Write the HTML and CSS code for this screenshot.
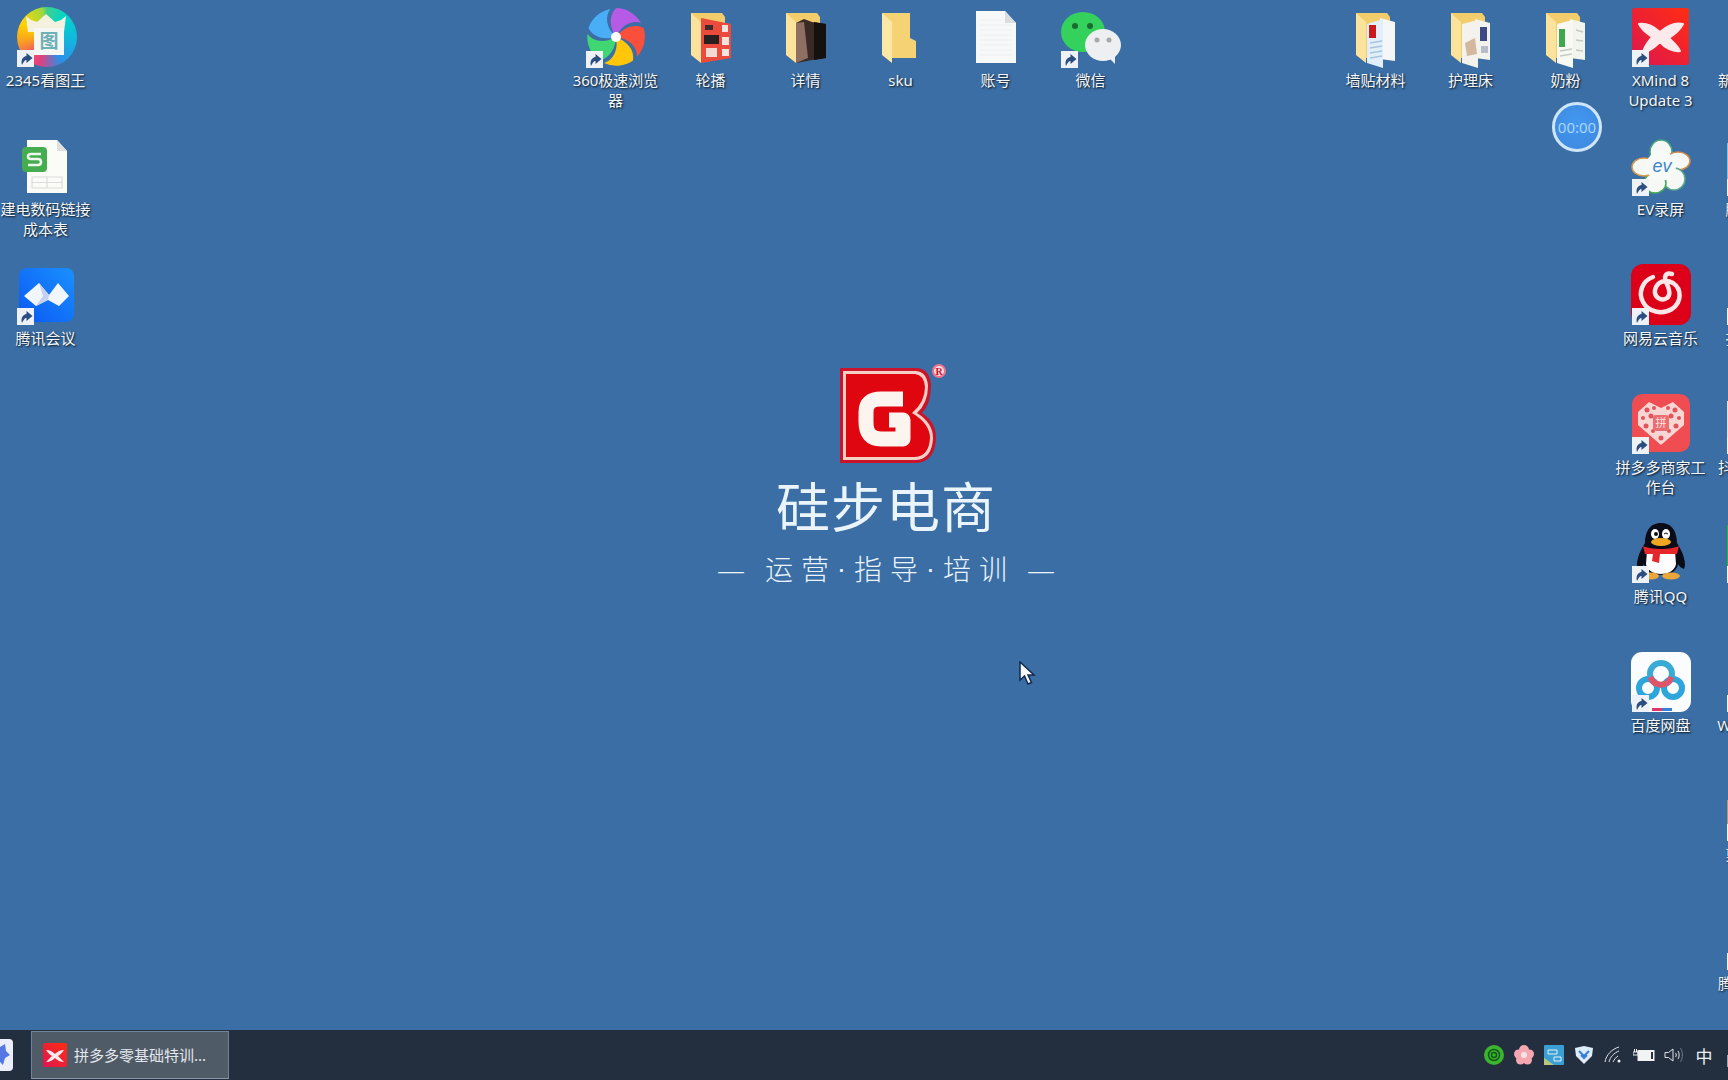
FILE: index.html
```html
<!DOCTYPE html>
<html lang="zh-CN">
<head>
<meta charset="utf-8">
<title>Desktop</title>
<link rel="stylesheet" href="styles.css">
</head>
<body>
<svg class="defs" width="0" height="0" aria-hidden="true">
  <defs>
    <symbol id="shortcut" viewBox="0 0 17 17">
      <rect width="17" height="17" fill="#eef2f6"/>
      <path d="M5 15C3.500 10 6 6.500 9.500 6V3L15.500 8 9.500 13V10C7.500 10 6.500 12 5 15Z" fill="#2b4d80"/>
    </symbol>
    <symbol id="folder-door" viewBox="0 0 60 60">
      <path d="M10 5H41L44 9V50H20L10 47Z" fill="#f3cd6c"/>
      <path d="M10 5 20 14V55L10 47Z" fill="#fbe39c"/>
    </symbol>
    <linearGradient id="xm" x1="0" y1="1" x2="1" y2="0">
      <stop offset="0" stop-color="#dd1650"/><stop offset="1" stop-color="#ff2d12"/>
    </linearGradient>
    <linearGradient id="tm" x1="0" y1="1" x2="1" y2="0">
      <stop offset="0" stop-color="#0a58f2"/><stop offset="1" stop-color="#1a90ff"/>
    </linearGradient>
  </defs>
</svg>

<main class="desktop">
  <div class="wallpaper">
    <svg class="logo-mark" width="110" height="102" viewBox="0 0 110 102">
      <path d="M0 6H77Q90 7 91 23 91 42 82 51 96 60 96 76 95 100 76 101H0Z" fill="#c9142a"/>
      <path d="M3 9H76Q87 10 88 24 88 41 77 51 93 61 93 76 92 97 76 98H3Z" fill="#f4cfc6"/>
      <path d="M6 12H75Q84 13 85 25 85 40 72 51 90 62 90 76 89 94 75 95H6Z" fill="#e0060f"/>
      <path d="M63 37H41Q26 37 26 50V60Q26 77 41 77H63V58H49" fill="none" stroke="#fbf4ef" stroke-width="15" stroke-linejoin="round"/>
      <circle cx="99" cy="9" r="6" fill="#fbd9df" stroke="#f0738d" stroke-width="2"/>
      <text x="99" y="13" class="logo-r">R</text>
    </svg>
    <div class="brand">硅步电商</div>
    <div class="slogan">
      <span class="slogan-dash">—</span>
      <span class="slogan-word">运营</span><span class="slogan-dot">·</span><span class="slogan-word">指导</span><span class="slogan-dot">·</span><span class="slogan-word">培训</span>
      <span class="slogan-dash">—</span>
    </div>
  </div>

  <div class="icons">

    <div class="item c0 r0">
      <div class="ico">
        <div class="round-2345"></div>
        <svg class="glyph" viewBox="0 0 60 60">
          <path d="M10 8 15 12 21 14 30 6 39 14 45 12 50 8 48 24H12Z" fill="#f5f1df"/>
          <rect x="18" y="20" width="30" height="27" fill="#f5f7f2"/>
          <text x="33" y="40" class="pic-char">图</text>
        </svg>
        <svg class="sc"><use href="#shortcut"/></svg>
      </div>
      <span class="label">2345看图王</span>
    </div>

    <div class="item c0 r1">
      <div class="ico">
        <svg class="glyph" viewBox="0 0 60 60">
          <path d="M11 3H41L51 14V56H11Z" fill="#fbfbf8"/>
          <path d="M41 3 51 14H41Z" fill="#dfe1dd"/>
          <rect x="6" y="10" width="25" height="25" rx="4" fill="#45ad50"/>
          <path d="M25 17H15Q12 17 12 19.500T15 22H22Q25 22 25 25T22 28H12" fill="none" stroke="#eef7ee" stroke-width="2.500"/>
          <path d="M16 40H46V51H16ZM16 45.500H46M31 40V51" fill="none" stroke="#dcdedc" stroke-width="1.200"/>
        </svg>
      </div>
      <span class="label">建电数码链接成本表</span>
    </div>

    <div class="item c0 r2">
      <div class="ico">
        <svg class="glyph" viewBox="0 0 60 60">
          <rect x="3" y="2" width="55" height="54" rx="8" fill="url(#tm)"/>
          <path d="M8 30 23 17 33 29 42 17 53 30 43 40 32 34 20 40Z" fill="#f1f6fd"/>
          <path d="M23 17 33 29 32 34 20 40 27 30Z" fill="#c5cff0"/>
        </svg>
        <svg class="sc"><use href="#shortcut"/></svg>
      </div>
      <span class="label">腾讯会议</span>
    </div>

    <div class="item c6 r0">
      <div class="ico">
        <svg class="glyph" viewBox="0 0 60 60">
          <path d="M30 29C24 20 22 8 30 0A29 29 0 0 1 55 15C47 12 36 16 30 29Z" fill="#49aef6" transform="rotate(288 30 29)"/>
          <path d="M30 29C24 20 22 8 30 0A29 29 0 0 1 55 15C47 12 36 16 30 29Z" fill="#40d673" transform="rotate(216 30 29)"/>
          <path d="M30 29C24 20 22 8 30 0A29 29 0 0 1 55 15C47 12 36 16 30 29Z" fill="#ffc60a" transform="rotate(144 30 29)"/>
          <path d="M30 29C24 20 22 8 30 0A29 29 0 0 1 55 15C47 12 36 16 30 29Z" fill="#fa4f3a" transform="rotate(72 30 29)"/>
          <path d="M30 29C24 20 22 8 30 0A29 29 0 0 1 55 15C47 12 36 16 30 29Z" fill="#b65be6"/>
          <circle cx="30" cy="29" r="5" fill="#fdfdfd"/>
        </svg>
        <svg class="sc sc-left"><use href="#shortcut"/></svg>
      </div>
      <span class="label">360极速浏览器</span>
    </div>

    <div class="item c7 r0">
      <div class="ico">
        <svg class="glyph" viewBox="0 0 60 60"><use href="#folder-door"/>
          <path d="M20 10 50 16V50L20 55Z" fill="#ea4b3c"/>
          <rect x="24" y="17" width="8" height="5" fill="#3d2a2a"/>
          <rect x="23" y="27" width="15" height="9" fill="#2a1f20"/>
          <rect x="25" y="40" width="11" height="9" fill="#f3d9d2"/>
          <rect x="41" y="17" width="6" height="7" fill="#f6e3df"/>
          <rect x="41" y="29" width="7" height="8" fill="#f6e3df"/>
          <rect x="41" y="41" width="7" height="7" fill="#f6e3df"/>
        </svg>
      </div>
      <span class="label">轮播</span>
    </div>

    <div class="item c8 r0">
      <div class="ico">
        <svg class="glyph" viewBox="0 0 60 60"><use href="#folder-door"/>
          <path d="M20 15 28 11 36 14 50 16V50L36 52 20 55Z" fill="#3a2a26"/>
          <path d="M20 15 28 14 32 50 20 55Z" fill="#8e6f62"/>
          <path d="M38 14 50 16V50L38 52Z" fill="#14110f"/>
        </svg>
      </div>
      <span class="label">详情</span>
    </div>

    <div class="item c9 r0">
      <div class="ico">
        <svg class="glyph" viewBox="0 0 60 60">
          <path d="M11 5H39V30L45 33V50H21Z" fill="#f5d274"/>
          <path d="M11 5 21 14V55L11 47Z" fill="#fbe7a6"/>
        </svg>
      </div>
      <span class="label">sku</span>
    </div>

    <div class="item c10 r0">
      <div class="ico">
        <svg class="glyph" viewBox="0 0 60 60">
          <path d="M10 3H39L50 15V55H10Z" fill="#f7f8f8"/>
          <path d="M39 3 50 15H39Z" fill="#d9dde0"/>
          <path d="M14 12H36M14 17H46M14 22H46M14 27H46M14 32H46M14 37H46M14 42H46M14 47H46" stroke="#eceef0"/>
        </svg>
      </div>
      <span class="label">账号</span>
    </div>

    <div class="item c11 r0">
      <div class="ico">
        <svg class="glyph" viewBox="0 0 60 60">
          <ellipse cx="22" cy="24" rx="22" ry="20" fill="#34d15d"/>
          <circle cx="14" cy="18" r="3" fill="#1a6b32"/>
          <circle cx="29" cy="18" r="3" fill="#1a6b32"/>
          <ellipse cx="42" cy="37" rx="18" ry="16" fill="#eeeff0"/>
          <path d="M48 50 54 56 54 46Z" fill="#eeeff0"/>
          <circle cx="36" cy="32" r="2.500" fill="#a8a8a8"/>
          <circle cx="48" cy="32" r="2.500" fill="#a8a8a8"/>
        </svg>
        <svg class="sc sc-left"><use href="#shortcut"/></svg>
      </div>
      <span class="label">微信</span>
    </div>

    <div class="item c14 r0">
      <div class="ico">
        <svg class="glyph" viewBox="0 0 60 60"><use href="#folder-door"/>
          <path d="M34 10 49 14V53L34 51Z" fill="#f5f6f7"/>
          <path d="M21 16 37 11V60L21 55Z" fill="#e0effa"/>
          <rect x="23" y="17" width="7" height="13" fill="#c8191d"/>
          <path d="M24 35 36 33M24 40 36 38M24 45 36 43M24 50 36 48" stroke="#a8c4dc" stroke-width="1.500"/>
        </svg>
      </div>
      <span class="label">墙贴材料</span>
    </div>

    <div class="item c15 r0">
      <div class="ico">
        <svg class="glyph" viewBox="0 0 60 60"><use href="#folder-door"/>
          <path d="M34 11 49 15V52L34 50Z" fill="#f3f3ee"/>
          <path d="M21 16 37 12V60L21 55Z" fill="#f4f2ec"/>
          <rect x="39" y="19" width="7" height="14" fill="#3e4a86"/>
          <path d="M24 35 34 30 36 46 26 48Z" fill="#d3b79e"/>
          <rect x="40" y="38" width="7" height="7" fill="#b7bcc9"/>
        </svg>
      </div>
      <span class="label">护理床</span>
    </div>

    <div class="item c16 r0">
      <div class="ico">
        <svg class="glyph" viewBox="0 0 60 60"><use href="#folder-door"/>
          <path d="M34 11 49 15V52L34 50Z" fill="#f2f4ee"/>
          <path d="M21 16 37 12V60L21 55Z" fill="#f7f9f2"/>
          <rect x="23" y="21" width="6" height="18" fill="#3fa84e"/>
          <path d="M24 43 36 41M24 48 36 46M40 22 47 24M40 32 47 33M40 42 47 43" stroke="#c4cbbf" stroke-width="1.500"/>
        </svg>
      </div>
      <span class="label">奶粉</span>
    </div>

    <div class="item c17 r0">
      <div class="ico">
        <svg class="glyph" viewBox="0 0 60 60">
          <rect x="1" y="0" width="57" height="57" rx="3" fill="url(#xm)"/>
          <path d="M8 16C15 15 22 18 29 24 36 18 43 14 52 16 49 22 44 26 38 30 42 34 47 38 49 43 42 44 34 40 29 34 24 39 18 43 12 45 12 40 17 34 21 29 15 25 10 21 8 16Z" fill="#fbe9ec" stroke="#fbe9ec" stroke-width="2" stroke-linejoin="round"/>
        </svg>
        <svg class="sc"><use href="#shortcut"/></svg>
      </div>
      <span class="label">XMind 8 Update 3</span>
    </div>

    <div class="item c17 r1">
      <div class="ico">
        <svg class="glyph" viewBox="0 0 60 60">
          <g stroke-width="1.500" fill="#f5f8f4">
            <ellipse cx="30" cy="15" rx="11" ry="12" stroke="#46a67c"/>
            <ellipse cx="47" cy="24" rx="12" ry="9" stroke="#d58a4a"/>
            <ellipse cx="43" cy="42" rx="11" ry="11" stroke="#5aa98a"/>
            <ellipse cx="24" cy="46" rx="11" ry="10" stroke="#45a65a"/>
            <ellipse cx="13" cy="30" rx="12" ry="9" stroke="#d59a4a"/>
          </g>
          <circle cx="30" cy="29" r="15" fill="#f8faf7"/>
          <text x="31" y="35" class="ev-mark">ev</text>
        </svg>
        <svg class="sc"><use href="#shortcut"/></svg>
      </div>
      <span class="label">EV录屏</span>
    </div>

    <div class="item c17 r2">
      <div class="ico">
        <svg class="glyph" viewBox="0 0 60 60">
          <rect x="0" y="-2" width="60" height="61" rx="12" fill="#dc0019"/>
          <path d="M22 11C11 15 7 27 12 36 17 46 31 49 41 43 51 36 51 23 42 17 35 13 26 15 24 24 23 31 30 36 36 32 40 29 38 22 35 16 33 11 34 6 41 8" fill="none" stroke="#fde6e6" stroke-width="4.500" stroke-linecap="round"/>
        </svg>
        <svg class="sc"><use href="#shortcut"/></svg>
      </div>
      <span class="label">网易云音乐</span>
    </div>

    <div class="item c17 r3">
      <div class="ico">
        <svg class="glyph" viewBox="0 0 60 60">
          <rect x="1" y="-1" width="58" height="58" rx="10" fill="#ef4d52"/>
          <path d="M7 17 18 7 30 13 42 7 53 17V30L30 50 7 30Z" fill="#f8d6d4"/>
          <g fill="#e2545a">
            <circle cx="16" cy="15" r="2.500"/><circle cx="23" cy="13" r="2"/><circle cx="37" cy="13" r="2"/><circle cx="44" cy="15" r="2.500"/>
            <circle cx="12" cy="23" r="2"/><circle cx="20" cy="21" r="2.500"/><circle cx="40" cy="21" r="2.500"/><circle cx="48" cy="23" r="2"/>
            <circle cx="15" cy="31" r="2.500"/><circle cx="45" cy="31" r="2.500"/><circle cx="22" cy="36" r="2"/><circle cx="38" cy="36" r="2"/>
            <circle cx="30" cy="43" r="2.500"/>
          </g>
          <rect x="22" y="20" width="16" height="16" rx="3" fill="#ea6d70"/>
          <text x="30" y="32" class="pdd-char">拼</text>
        </svg>
        <svg class="sc"><use href="#shortcut"/></svg>
      </div>
      <span class="label">拼多多商家工作台</span>
    </div>

    <div class="item c17 r4">
      <div class="ico">
        <svg class="glyph" viewBox="0 0 60 60">
          <path d="M30 -1C42 -1 46 9 46 19 52 28 56 40 53 45 50 44 48 42 47 40 46 46 42 50 30 51 18 50 14 46 13 40 12 42 10 44 7 45 4 40 8 28 14 19 14 9 18 -1 30 -1Z" fill="#0a0d17"/>
          <path d="M16 27H44L45 40C44 46 38 50 30 50 22 50 16 46 15 40Z" fill="#fdfdfd"/>
          <path d="M12 22C20 26 40 26 48 22L46 30H29L28 39 21 37 22 30H14Z" fill="#e5262b"/>
          <ellipse cx="24" cy="10" rx="4" ry="5" fill="#fff"/>
          <ellipse cx="35" cy="10" rx="4" ry="5" fill="#fff"/>
          <circle cx="25" cy="10" r="2" fill="#111"/>
          <path d="M33 10Q35 8 37 10" stroke="#111" fill="none"/>
          <ellipse cx="30" cy="18" rx="10" ry="4" fill="#f0a820"/>
          <ellipse cx="20" cy="52" rx="8" ry="3.500" fill="#e9a63a"/>
          <ellipse cx="40" cy="52" rx="9" ry="3.500" fill="#e9a63a"/>
        </svg>
        <svg class="sc"><use href="#shortcut"/></svg>
      </div>
      <span class="label">腾讯QQ</span>
    </div>

    <div class="item c17 r5">
      <div class="ico">
        <svg class="glyph" viewBox="0 0 60 60">
          <rect x="0" y="-1" width="60" height="60" rx="11" fill="#fbfcfd"/>
          <circle cx="17" cy="35" r="9" fill="none" stroke="#2ea5db" stroke-width="6"/>
          <circle cx="42" cy="35" r="9" fill="none" stroke="#2ea5db" stroke-width="6"/>
          <circle cx="30" cy="21" r="11" fill="none" stroke="#39a9d6" stroke-width="6"/>
          <path d="M19.500 24A11 11 0 0 0 40.500 24" fill="none" stroke="#e0546a" stroke-width="6"/>
          <rect x="21" y="55" width="10" height="3" fill="#e0366c"/>
          <rect x="31" y="55" width="10" height="3" fill="#3b7ed8"/>
        </svg>
        <svg class="sc"><use href="#shortcut"/></svg>
      </div>
      <span class="label">百度网盘</span>
    </div>

    <div class="item c18 r0"><div class="ico"></div><span class="label">新建文件夹</span></div>
    <div class="item c18 r1"><div class="ico ico-sky"><svg class="sc"><use href="#shortcut"/></svg></div><span class="label">腾讯视频</span></div>
    <div class="item c18 r2"><div class="ico"><svg class="sc"><use href="#shortcut"/></svg></div><span class="label">抖音直播</span></div>
    <div class="item c18 r3"><div class="ico ico-pale"><svg class="sc"><use href="#shortcut"/></svg></div><span class="label">抖店工作台</span></div>
    <div class="item c18 r4"><div class="ico ico-green"><svg class="sc"><use href="#shortcut"/></svg></div><span class="label">爱奇艺</span></div>
    <div class="item c18 r5"><div class="ico"><svg class="sc"><use href="#shortcut"/></svg></div><span class="label">WPS Office</span></div>
    <div class="item c18 r6"><div class="ico ico-tan"><svg class="sc"><use href="#shortcut"/></svg></div><span class="label">剪映专业</span></div>
    <div class="item c18 r7"><div class="ico"><svg class="sc"><use href="#shortcut"/></svg></div><span class="label">腾讯课堂直</span></div>
  </div>

  <div class="timer">00:00</div>

  <svg class="pointer" width="17" height="24" viewBox="0 0 17 24">
    <path d="M1 1V19L5.500 15 9 23 12.500 21.500 9 14H15Z" fill="#f6f9fc" stroke="#13294a" stroke-width="1.500"/>
  </svg>
</main>

<footer class="taskbar">
  <div class="start">
    <svg width="13" height="32" viewBox="0 0 13 32">
      <path d="M0 0H9Q13 0 13 4V28Q13 32 9 32H0Z" fill="#eceefb"/>
      <path d="M0 8 5 5 6 12 10 16 5 19 3 26 0 23Z" fill="#5577e4"/>
    </svg>
  </div>
  <div class="task-btn">
    <svg width="26" height="26" viewBox="0 0 26 26">
      <rect x="1" y="1" width="24" height="24" rx="2" fill="url(#xm)"/>
      <path d="M4 8C8 8 11 10 13 12 15 10 18 8 22 8 20 11 18 13 16 14 18 16 20 18 22 20 18 20 15 18 13 16 11 18 8 20 4 20 6 18 8 16 10 14 8 13 6 11 4 8Z" fill="#fbe9ec"/>
    </svg>
    <span class="task-title">拼多多零基础特训...</span>
  </div>
  <div class="tray">
    <div class="tray-item">
      <svg width="20" height="20" viewBox="0 0 20 20">
        <circle cx="10" cy="10" r="10" fill="#3cb52e"/>
        <circle cx="10" cy="10" r="5.500" fill="none" stroke="#10591a" stroke-width="1.500"/>
        <circle cx="10" cy="10" r="2.500" fill="none" stroke="#10591a" stroke-width="1.500"/>
      </svg>
    </div>
    <div class="tray-item">
      <svg width="20" height="20" viewBox="0 0 20 20">
        <g fill="#f4a7b0">
          <circle cx="10" cy="5" r="5"/><circle cx="15.500" cy="9" r="4.500"/><circle cx="13.500" cy="15" r="4.500"/><circle cx="6.500" cy="15" r="4.500"/><circle cx="4.500" cy="9" r="4.500"/>
        </g>
        <circle cx="10" cy="10" r="3" fill="#f6e4e4"/>
      </svg>
    </div>
    <div class="tray-item">
      <svg width="20" height="20" viewBox="0 0 20 20">
        <rect width="20" height="20" rx="1" fill="#3b9fd4"/>
        <path d="M0 13 10 20H0Z" fill="#b9c77d"/>
        <path d="M4 5H13V9H4ZM10 12H17V16H10Z" fill="none" stroke="#dff2fb"/>
      </svg>
    </div>
    <div class="tray-item">
      <svg width="20" height="20" viewBox="0 0 20 20">
        <path d="M1 3 10 1 19 3 18 11 10 19 2 11Z" fill="#dcecfb"/>
        <path d="M5 6 10 11 15 6M7 10 10 13 13 10" fill="none" stroke="#3a7fd5" stroke-width="2"/>
      </svg>
    </div>
    <div class="tray-item">
      <svg width="20" height="20" viewBox="0 0 20 20" fill="none" stroke="#dfe3e8">
        <path d="M1 17C2 10 8 4 15 2M5 17C6 12 10 8 15 6M9 17C10 15 12 12 14 11"/>
        <circle cx="15" cy="16" r="1.500" fill="#eef0f3" stroke="none"/>
      </svg>
    </div>
    <div class="tray-item">
      <svg width="22" height="16" viewBox="0 0 22 16">
        <rect x="5" y="3.500" width="16" height="10" fill="#f2f3f5" stroke="#eef0f2"/>
        <rect x="18" y="5" width="2" height="7" fill="#232f3f"/>
        <path d="M0 5H5V8H0ZM1.500 2V5M3.500 2V5" stroke="#f0f1f3" fill="none"/>
      </svg>
    </div>
    <div class="tray-item">
      <svg width="20" height="20" viewBox="0 0 20 20" fill="none" stroke="#dfe3e8">
        <path d="M1 7.500H4.500L9 4V16L4.500 12.500H1Z"/>
        <path d="M11.500 8C12.500 9 12.500 11 11.500 12M14 6C15.500 8 15.500 12 14 14" />
        <path d="M16.500 3C19 7 19 13 16.500 17" stroke="#707985"/>
      </svg>
    </div>
    <div class="tray-item tray-ime">中</div>
    <div class="tray-edge"><span class="tray-edge-mark"></span></div>
  </div>
</footer>
</body>
</html>
```

FILE: styles.css
```css
* {
  box-sizing: border-box;
}

html,
body {
  margin: 0;
  padding: 0;
}

body {
  width: 1728px;
  height: 1080px;
  display: flex;
  flex-direction: column;
  overflow: hidden;
  background: #3a6ea5;
  font-family: "Noto Sans", "Noto Sans CJK SC", sans-serif;
}

.defs {
  position: absolute;
}

.desktop {
  position: relative;
  flex: 0 0 1030px;
  overflow: hidden;
}

.wallpaper {
  position: absolute;
  inset: 0;
  display: flex;
  flex-direction: column;
  align-items: center;
  padding: 362px 0 0 44px;
  color: #eaf4fa;
}

.logo-mark {
  margin-left: 18px;
  display: block;
}

.logo-r {
  font: bold 10px "Liberation Serif", serif;
  fill: #c9142a;
  text-anchor: middle;
}

.brand {
  margin-top: 8px;
  font-size: 54px;
  line-height: 70px;
  font-weight: 400;
  letter-spacing: 1px;
}

.slogan {
  display: flex;
  align-items: center;
  margin-top: 7px;
  font-size: 28px;
  line-height: 40px;
  font-weight: 300;
}

.slogan-dash:first-child {
  margin-right: 20px;
}

.slogan-dash:last-child {
  margin-left: 20px;
}

.slogan-word {
  letter-spacing: 8px;
  margin-right: -8px;
}

.slogan-dot {
  width: 25px;
  text-align: center;
  font-family: "Liberation Sans", sans-serif;
}

.icons {
  display: grid;
  grid-template-columns: repeat(19, 95px);
  grid-auto-rows: 129px;
  width: 1805px;
  margin-left: -2px;
}

.item {
  display: flex;
  flex-direction: column;
  align-items: center;
  padding-top: 8px;
}

.c0 { grid-column: 1; }
.c6 { grid-column: 7; }
.c7 { grid-column: 8; }
.c8 { grid-column: 9; }
.c9 { grid-column: 10; }
.c10 { grid-column: 11; }
.c11 { grid-column: 12; }
.c14 { grid-column: 15; }
.c15 { grid-column: 16; }
.c16 { grid-column: 17; }
.c17 { grid-column: 18; }
.c18 { grid-column: 19; }

.r0 { grid-row: 1; }
.r1 { grid-row: 2; }
.r2 { grid-row: 3; }
.r3 { grid-row: 4; }
.r4 { grid-row: 5; }
.r5 { grid-row: 6; }
.r6 { grid-row: 7; }
.r7 { grid-row: 8; }

.ico {
  position: relative;
  flex: 0 0 60px;
  width: 60px;
  height: 60px;
}

.glyph {
  position: absolute;
  inset: 0;
  width: 60px;
  height: 60px;
  overflow: visible;
}

.sc {
  position: absolute;
  left: 1px;
  top: 42px;
  width: 17px;
  height: 17px;
}

.sc-left {
  left: 0;
  top: 43px;
}

.round-2345 {
  position: absolute;
  left: 1px;
  top: -1px;
  width: 60px;
  height: 60px;
  border-radius: 50%;
  background: conic-gradient(#3fcf8e 0deg, #00d6c8 40deg, #14b4e0 100deg, #2b8fe8 150deg, #e0407f 195deg, #f04f6a 220deg, #f8a020 260deg, #ffd400 300deg, #9fd83f 350deg, #3fcf8e 360deg);
}

.pic-char {
  font-size: 19px;
  font-weight: 700;
  fill: #6fb0b8;
  text-anchor: middle;
}

.ev-mark {
  font: italic 18px "Liberation Sans", sans-serif;
  fill: #3c86c8;
  text-anchor: middle;
}

.pdd-char {
  font-size: 11px;
  fill: #fbe3e1;
  text-anchor: middle;
}

.ico-sky::before,
.ico-pale::before,
.ico-green::before,
.ico-tan::before {
  content: "";
  position: absolute;
  left: 1px;
  width: 20px;
}

.ico-sky::before {
  top: 6px;
  height: 36px;
  background: #7cc0ea;
}

.ico-pale::before {
  top: 6px;
  height: 36px;
  background: #d8e3ee;
}

.ico-green::before {
  top: 1px;
  height: 42px;
  background: #1fb83c;
}

.ico-tan::before {
  top: 18px;
  height: 24px;
  background: #a89a72;
}

.label {
  width: 92px;
  margin-top: 2px;
  color: #f4f7fa;
  font-size: 15px;
  line-height: 20px;
  text-align: center;
  text-shadow: 1px 1px 2px rgba(0, 0, 0, 0.85);
}

.timer {
  position: absolute;
  left: 1552px;
  top: 102px;
  width: 50px;
  height: 50px;
  display: flex;
  align-items: center;
  justify-content: center;
  padding-bottom: 1px;
  border: 3px solid #cfe6f8;
  border-radius: 50%;
  background: radial-gradient(circle at 50% 40%, #4298f0, #3f86dd);
  color: #a9d5f9;
  font-size: 15px;
}

.pointer {
  position: absolute;
  left: 1019px;
  top: 661px;
}

.taskbar {
  flex: 0 0 50px;
  display: flex;
  align-items: center;
  background: #232f3f;
}

.start {
  flex: 0 0 31px;
  height: 32px;
}

.start svg {
  display: block;
}

.task-btn {
  display: flex;
  align-items: center;
  gap: 6px;
  flex: 0 0 198px;
  height: 48px;
  padding-left: 10px;
  padding-bottom: 2px;
  background: #505b68;
  border: 1px solid #71839a;
  border-bottom-color: #8a98a8;
}

.task-btn svg {
  margin-top: 2px;
}

.task-title {
  color: #e4e8ec;
  font-size: 15px;
  white-space: nowrap;
}

.tray {
  display: flex;
  align-items: center;
  height: 100%;
  margin-left: auto;
}

.tray-item {
  display: flex;
  align-items: center;
  justify-content: center;
  width: 30px;
}

.tray-ime {
  color: #eef1f4;
  font-size: 17px;
}

.tray-edge {
  display: flex;
  justify-content: flex-end;
  width: 9px;
}

.tray-edge-mark {
  width: 1px;
  height: 12px;
  margin-top: 12px;
  background: #9aa4b0;
}
```
